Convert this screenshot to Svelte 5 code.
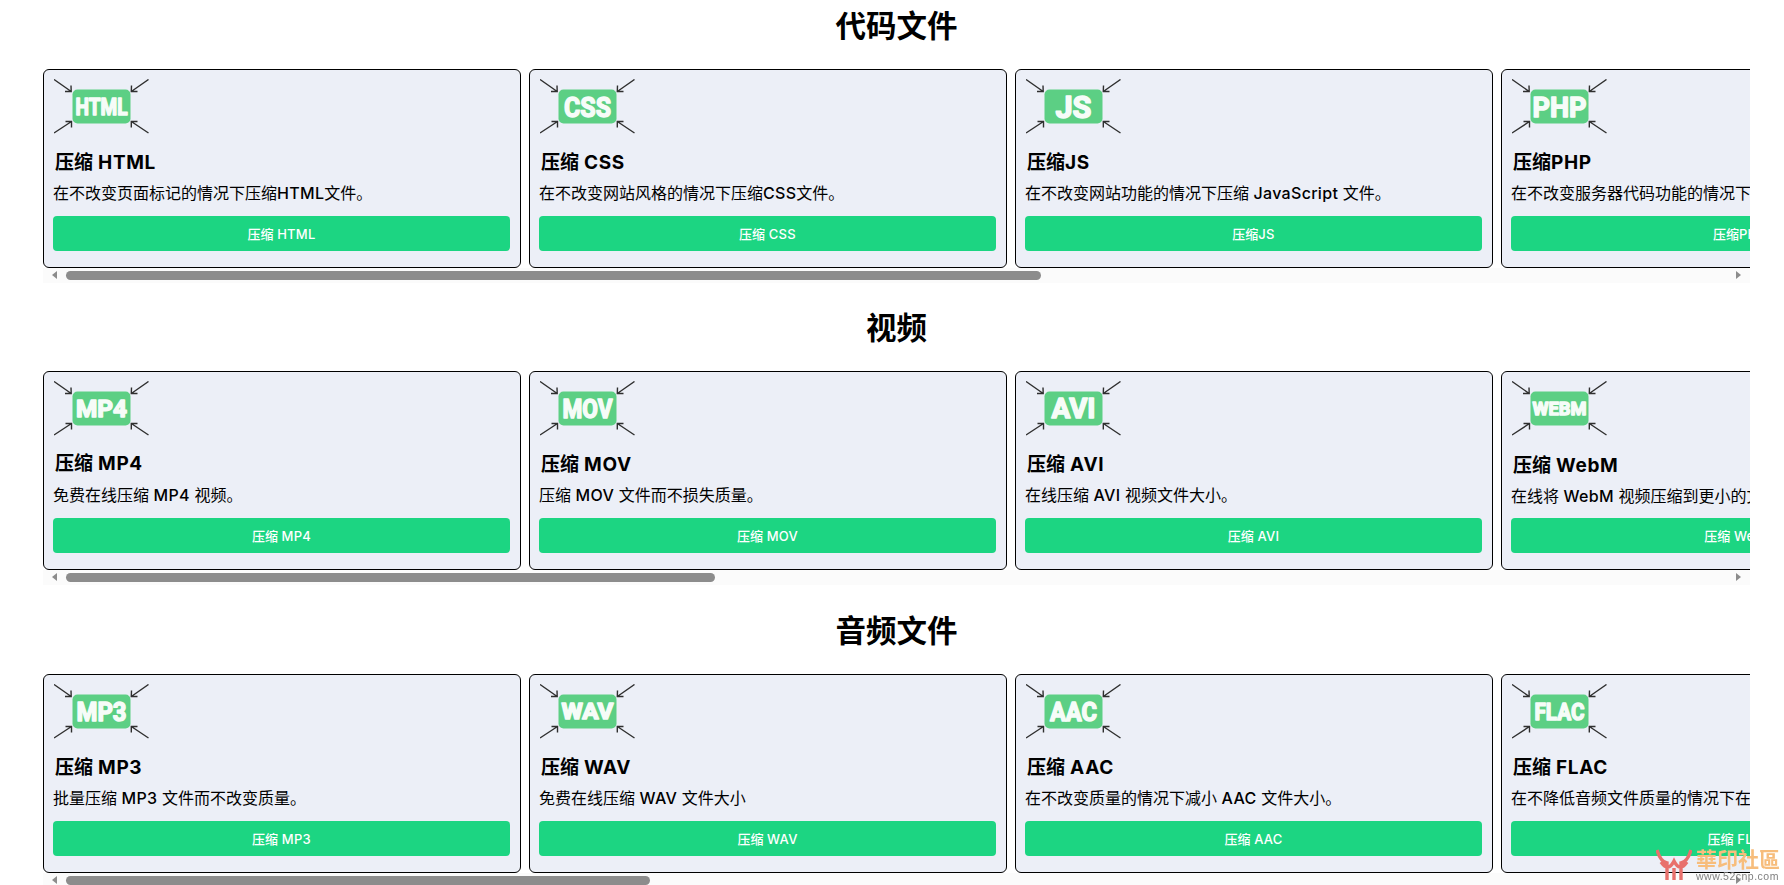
<script>
  const sections = [
    { title: '代码文件', thumb: 975, cards: [
      { icon: 'HTML', name: '压缩 HTML', desc: '在不改变页面标记的情况下压缩HTML文件。', size: 23, len: 52 },
      { icon: 'CSS', name: '压缩 CSS', desc: '在不改变网站风格的情况下压缩CSS文件。', size: 28.5, len: 47 },
      { icon: 'JS', name: '压缩JS', desc: '在不改变网站功能的情况下压缩 JavaScript 文件。', size: 31, len: 36 },
      { icon: 'PHP', name: '压缩PHP', desc: '在不改变服务器代码功能的情况下压缩PHP文件。', size: 28.5, len: 54 }
    ]},
    { title: '视频', thumb: 649, cards: [
      { icon: 'MP4', name: '压缩 MP4', desc: '免费在线压缩 MP4 视频。', size: 24.5, len: 51, nudge: 'up' },
      { icon: 'MOV', name: '压缩 MOV', desc: '压缩 MOV 文件而不损失质量。', size: 25.5, len: 50 },
      { icon: 'AVI', name: '压缩 AVI', desc: '在线压缩 AVI 视频文件大小。', size: 27.5, len: 44 },
      { icon: 'WEBM', name: '压缩 WebM', desc: '在线将 WebM 视频压缩到更小的文件大小。', size: 19, len: 54, nudge: 'down' }
    ]},
    { title: '音频文件', thumb: 584, cards: [
      { icon: 'MP3', name: '压缩 MP3', desc: '批量压缩 MP3 文件而不改变质量。', size: 25.5, len: 50 },
      { icon: 'WAV', name: '压缩 WAV', desc: '免费在线压缩 WAV 文件大小', size: 21.5, len: 52 },
      { icon: 'AAC', name: '压缩 AAC', desc: '在不改变质量的情况下减小 AAC 文件大小。', size: 25.5, len: 47 },
      { icon: 'FLAC', name: '压缩 FLAC', desc: '在不降低音频文件质量的情况下在线压缩。', size: 23.5, len: 50 }
    ]}
  ];
  // Latin runs are set wider than the CJK around them
  const runs = (text) => text.split(/([A-Za-z0-9 ]+)/).filter(Boolean).map((t) => ({ t, latin: /^[A-Za-z0-9 ]+$/.test(t) }));
  const baseline = (size) => 27.5 + size * 0.355;
</script>

{#snippet mixed(text)}{#each runs(text) as r}{#if r.latin}<span class="latin">{r.t}</span>{:else}{r.t}{/if}{/each}{/snippet}

<div class="page">
  {#each sections as s}
    <section class="section">
      <h2 class="heading">{s.title}</h2>
      <div class="scroller">
        <div class="row">
          {#each s.cards as c}
            <article class="card" class:up={c.nudge === 'up'} class:down={c.nudge === 'down'}>
              <svg class="icon" width="96" height="58" viewBox="0 0 96 58" aria-hidden="true">
                <g fill="none" stroke="#2f2f2f" stroke-width="1.4">
                  <path d="M0 .5 L17.200 12.500 M17 6.500 L17.200 12.500 L11 12.500" />
                  <path d="M94.500 .5 L77.300 12.500 M77.500 6.500 L77.300 12.500 L83.500 12.500" />
                  <path d="M0 54 L17.500 42.500 M11.500 42.500 L17.500 42.500 L17.500 48.500" />
                  <path d="M94.500 54 L77.300 42.500 M83.500 42.500 L77.300 42.500 L77.300 48.500" />
                </g>
                <rect x="18.500" y="10.500" width="58" height="34" rx="5" fill="#5ccf84" />
                <text class="icon-text" x="47.500" y={baseline(c.size)} text-anchor="middle" font-size={c.size} textLength={c.len} lengthAdjust="spacingAndGlyphs">{c.icon}</text>
              </svg>
              <h3 class="name">{@render mixed(c.name)}</h3>
              <p class="desc">{@render mixed(c.desc)}</p>
              <button class="btn" type="button">{@render mixed(c.name)}</button>
            </article>
          {/each}
        </div>
        <div class="bar">
          <span class="arrow left"></span>
          <span class="thumb" style="width:{s.thumb}px"></span>
          <span class="arrow right"></span>
        </div>
      </div>
    </section>
  {/each}
</div>

<div class="mark" aria-hidden="true">
  <svg width="36" height="33" viewBox="0 0 36 33">
    <path d="M1 1 C3 8 6 13 11 14 L11 31 M35 1 C33 8 30 13 25 14 L25 31 M5 13 C10 20 14 20 18 12 C22 20 26 20 31 13 M18 19 L18 31" fill="none" stroke="#e8706c" stroke-width="3.400" />
  </svg>
  <div class="mark-text">
    <span class="mark-cn">華印社區</span>
    <span class="mark-url">www.52cnp.com</span>
  </div>
</div>

<style>
  :global(html), :global(body) {
    margin: 0;
    height: 885px;
    overflow: hidden;
    background: #fff;
  }
  .page {
    padding: 0 34px 0 43px;
    font-family: Inter, "Noto Sans CJK SC", sans-serif;
    color: #000;
  }
  .section {
    height: 302px;
  }
  .section:nth-child(2) {
    height: 303px;
  }
  .heading {
    margin: 0;
    height: 69px;
    padding-top: 7px;
    box-sizing: border-box;
    font-size: 30.5px;
    line-height: 38px;
    font-weight: 700;
    text-align: center;
  }
  .scroller {
    width: 100%;
    overflow: hidden;
  }
  .row {
    display: flex;
    gap: 8px;
  }
  .card {
    flex: none;
    box-sizing: border-box;
    width: 478px;
    height: 199px;
    padding: 8.5px 9px 16.5px 9px;
    display: flex;
    flex-direction: column;
    background: #eceff7;
    border: 1.5px solid #000;
    border-radius: 6px;
  }
  .icon {
    display: block;
    flex: none;
    margin-left: 0.5px;
  }
  .icon-text {
    font-family: Roboto, sans-serif;
    font-weight: 700;
    fill: #f6fcf8;
    stroke: #f6fcf8;
    stroke-width: 1.5;
    stroke-linejoin: round;
    stroke-linecap: round;
  }
  .name {
    margin: 14.5px 0 0 2px;
    font-size: 19px;
    line-height: 24px;
    font-weight: 600;
  }
  .name .latin {
    letter-spacing: 0.6px;
    font-weight: 700;
  }
  .card.up .name {
    margin-top: 13.5px;
  }
  .card.up .desc {
    margin-top: 7px;
  }
  .card.down .name {
    margin-top: 15.5px;
  }
  .desc {
    margin: 6px 0 0;
    font-size: 16px;
    line-height: 24px;
    white-space: nowrap;
    font-weight: 400;
  }
  .desc .latin {
    letter-spacing: 0.3px;
    font-weight: 500;
  }
  .btn {
    margin-top: auto;
    height: 34.5px;
    width: 457px;
    flex: none;
    padding: 0;
    border: 0;
    border-radius: 4px;
    background: #1cd582;
    color: #fff;
    font-family: inherit;
    font-size: 13px;
    font-weight: 500;
  }
  .btn .latin {
    letter-spacing: 0.25px;
    font-weight: 500;
  }
  .bar {
    position: relative;
    height: 15px;
    background: #fbfbfb;
  }
  .thumb {
    position: absolute;
    left: 23px;
    top: 3px;
    height: 9px;
    border-radius: 5px;
    background: #8c8c8c;
  }
  .arrow {
    position: absolute;
    top: 3px;
    width: 0;
    height: 0;
    border-top: 4.5px solid transparent;
    border-bottom: 4.5px solid transparent;
  }
  .arrow.left {
    left: 9px;
    border-right: 5.5px solid #8c8c8c;
  }
  .arrow.right {
    right: 9px;
    border-left: 5.5px solid #8c8c8c;
  }
  .mark {
    position: fixed;
    right: 4px;
    bottom: 3px;
    display: flex;
    align-items: flex-end;
    gap: 4px;
    height: 36px;
    font-family: "Noto Sans CJK TC", sans-serif;
  }
  .mark-text {
    display: flex;
    flex-direction: column;
    width: 84px;
  }
  .mark-cn {
    font-size: 21px;
    line-height: 24px;
    font-weight: 700;
    color: #f7bd7c;
  }
  .mark-url {
    font-size: 10.5px;
    line-height: 12px;
    letter-spacing: 0.5px;
    white-space: nowrap;
    color: #808080;
    font-family: "Liberation Sans", sans-serif;
  }
</style>
